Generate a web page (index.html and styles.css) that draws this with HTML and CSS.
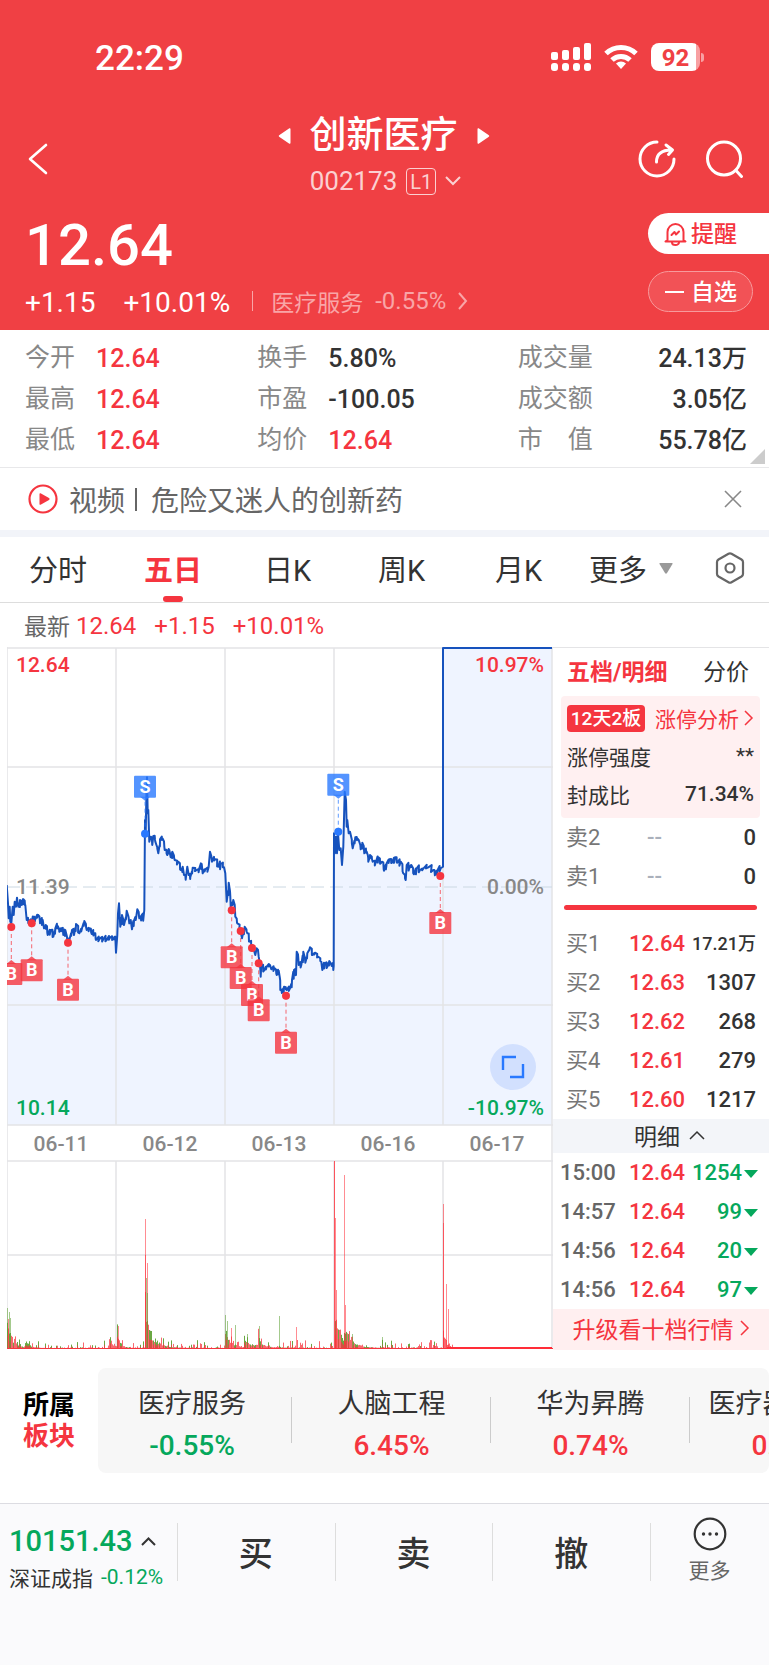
FILE: index.html
```html
<!DOCTYPE html>
<html lang="zh-CN">
<head>
    <meta charset="UTF-8">
    <meta name="viewport" content="width=device-width, initial-scale=1.0">
    <title>创新医疗 002173</title>
    <link rel="stylesheet" href="styles.css">
</head>
<body>
    <header class="header">
        <div class="status-bar">
            <span class="time">22:29</span>
            <div class="status-icons">
                <svg width="40" height="28" viewBox="0 0 40 28" fill="#fff">
                    <rect x="0" y="9" width="7" height="8" rx="2"/><rect x="11" y="7" width="7" height="10" rx="2"/>
                    <rect x="22" y="4" width="7" height="13" rx="2"/><rect x="33" y="0" width="7" height="17" rx="2"/>
                    <rect x="0" y="20" width="7" height="8" rx="3"/><rect x="11" y="20" width="7" height="8" rx="3"/>
                    <rect x="22" y="20" width="7" height="8" rx="3"/><rect x="33" y="20" width="7" height="8" rx="3"/>
                </svg>
                <svg width="34" height="26" viewBox="0 0 34 26" fill="none" stroke="#fff" stroke-width="5">
                    <path d="M2 9.5a21.5 21.5 0 0 1 30 0"/>
                    <path d="M8 16a13 13 0 0 1 18 0"/>
                    <path d="M17 25l-5-5.500a7.500 7.500 0 0 1 10 0z" fill="#fff" stroke="none"/>
                </svg>
                <div class="battery"><span>92</span></div>
            </div>
        </div>

        <nav class="nav">
            <button type="button" class="icon-btn back" aria-label="返回">
                <svg width="20" height="32" viewBox="0 0 20 32" fill="none" stroke="#fff" stroke-width="2.600" stroke-linecap="round" stroke-linejoin="round"><path d="M18 2L2 16l16 14"/></svg>
            </button>
            <div class="title">
                <div class="title-name">
                    <svg width="13" height="18" viewBox="0 0 13 18" fill="#fff"><path d="M11 1.500L1.500 8a1.200 1.200 0 0 0 0 2L11 16.500c1 .6 1.500 0 1.500-1v-13c0-1-.5-1.600-1.500-1z"/></svg>
                    <h1>创新医疗</h1>
                    <svg width="13" height="18" viewBox="0 0 13 18" fill="#fff"><path d="M2 1.500L11.500 8a1.200 1.200 0 0 1 0 2L2 16.500c-1 .6-1.500 0-1.500-1v-13c0-1 .5-1.600 1.500-1z"/></svg>
                </div>
                <button type="button" class="title-code">
                    <span>002173</span>
                    <span class="level">L1</span>
                    <svg width="16" height="10" viewBox="0 0 16 10" fill="none" stroke="#fbd0d1" stroke-width="2"><path d="M1 1l7 7 7-7"/></svg>
                </button>
            </div>
            <div class="nav-right">
                <button type="button" class="icon-btn" aria-label="分享">
                    <svg width="38" height="38" viewBox="0 0 38 38" fill="none" stroke="#fff" stroke-width="3" stroke-linecap="round" stroke-linejoin="round">
                        <path d="M19 2a17 17 0 1 0 17 17"/>
                        <path d="M18.500 22c0-8 5-12 15-12M28 5l6.500 5-4 4.500"/>
                    </svg>
                </button>
                <button type="button" class="icon-btn" aria-label="搜索">
                    <svg width="38" height="38" viewBox="0 0 38 38" fill="none" stroke="#fff" stroke-width="3" stroke-linecap="round"><circle cx="19" cy="18.500" r="16.500"/><path d="M31 30.500l5.500 6"/></svg>
                </button>
            </div>
        </nav>

        <div class="quote">
            <div class="quote-main">
                <div class="price">12.64</div>
                <div class="change">
                    <span>+1.15</span>
                    <span class="change-pct">+10.01%</span>
                    <a href="#" class="industry">医疗服务 <span>-0.55%</span>
                        <svg width="10" height="18" viewBox="0 0 10 18" fill="none" stroke="#f9a5a7" stroke-width="2"><path d="M1 1l7 8-7 8"/></svg>
                    </a>
                </div>
            </div>
            <div class="quote-actions">
                <button type="button" class="remind">
                    <svg width="23" height="24" viewBox="0 0 23 24" fill="none" stroke="#f5353f" stroke-width="2" stroke-linecap="round" stroke-linejoin="round">
                        <path d="M3.500 18v-8a8 8 0 0 1 16 0v8l2 1.500h-20zM8 20.500a3.500 2.500 0 0 0 7 0M7.500 13l3-3 1.500 2.500 3-3"/>
                    </svg>
                    <span>提醒</span>
                </button>
                <button type="button" class="watch"><i></i><span>自选</span></button>
            </div>
        </div>
    </header>

    <main>
        <section class="stats">
            <div class="stat"><span>今开</span><b class="up">12.64</b></div>
            <div class="stat"><span>换手</span><b>5.80%</b></div>
            <div class="stat end"><span>成交量</span><b>24.13万</b></div>
            <div class="stat"><span>最高</span><b class="up">12.64</b></div>
            <div class="stat"><span>市盈</span><b>-100.05</b></div>
            <div class="stat end"><span>成交额</span><b>3.05亿</b></div>
            <div class="stat"><span>最低</span><b class="up">12.64</b></div>
            <div class="stat"><span>均价</span><b class="up">12.64</b></div>
            <div class="stat end"><span>市　值</span><b>55.78亿</b></div>
            <i class="corner"></i>
        </section>

        <section class="video">
            <svg width="30" height="30" viewBox="0 0 30 30"><circle cx="15" cy="15" r="13.500" fill="none" stroke="#f5353f" stroke-width="2.200"/><path d="M11.500 10v10c0 1 .7 1 1.500.6l8-4.700c.8-.5.8-1.300 0-1.800l-8-4.700c-.8-.4-1.500-.4-1.500.6z" fill="#f5353f"/></svg>
            <a href="#">视频<i></i>危险又迷人的创新药</a>
            <button type="button" class="icon-btn" aria-label="关闭">
                <svg width="18" height="18" viewBox="0 0 18 18" stroke="#888" stroke-width="1.600"><path d="M1 1l16 16M17 1L1 17"/></svg>
            </button>
        </section>

        <div class="tabs">
            <button type="button">分时</button>
            <button type="button" class="active">五日</button>
            <button type="button">日K</button>
            <button type="button">周K</button>
            <button type="button">月K</button>
            <button type="button">更多 <svg width="14" height="11" viewBox="0 0 14 11" fill="#999"><path d="M1 0h12q1 0 .5 1L8 10q-1 1.500-2 0L.5 1Q0 0 1 0z"/></svg></button>
            <button type="button" aria-label="设置">
                <svg width="30" height="32" viewBox="0 0 30 32" fill="none" stroke="#666" stroke-width="2.200" stroke-linejoin="round"><path d="M13.500 1.800q1.500-.8 3 0l10 5.700q1.500 1 1.500 2.500v12q0 1.500-1.500 2.500l-10 5.700q-1.500.8-3 0l-10-5.700Q2 23.500 2 22V10q0-1.500 1.500-2.500z"/><circle cx="15" cy="16" r="4.500"/></svg>
            </button>
        </div>

        <div class="latest"><span>最新</span><b>12.64</b><b>+1.15</b><b>+10.01%</b></div>

        <section class="market">
            <div class="chart">
                <svg class="chart-svg" viewBox="0 0 546 702">
                    <path id="area" fill="#eff4ff"/>
                    <g class="grid">
                        <path d="M109 1v477M218 1v477M327 1v477M436 1v477M0 120h546M0 358h546"/>
                        <path d="M0 1h546M0 478h546M0 514h546M0 608h546M109 514v188M218 514v188M327 514v188M436 514v188"/>
                        <path d="M0 0v703M545 0v703"/>
                    </g>
                    <path d="M0 240h546" stroke="#cbd8e2" stroke-dasharray="13 6"/>
                    <path id="line" fill="none" stroke="#1652bd" stroke-width="2" stroke-linejoin="round"/>
                    <g class="axis">
                        <text x="9" y="25" class="fill-up">12.64</text>
                        <text x="9" y="247">11.39</text>
                        <text x="9" y="468" class="fill-down">10.14</text>
                        <text x="537" y="25" class="fill-up right">10.97%</text>
                        <text x="537" y="247" class="right">0.00%</text>
                        <text x="537" y="468" class="fill-down right">-10.97%</text>
                    </g>
                    <g class="axis dates">
                        <text x="54" y="504">06-11</text>
                        <text x="163" y="504">06-12</text>
                        <text x="272" y="504">06-13</text>
                        <text x="381" y="504">06-16</text>
                        <text x="490" y="504">06-17</text>
                    </g>
                    <g id="markers"></g>
                    <g id="volume"></g>
                    <circle cx="506" cy="420" r="23" fill="#d2e0fe"/>
                    <path d="M496 423v-13h13M516 417v13h-13" fill="none" stroke="#2979ff" stroke-width="2.400"/>
                </svg>
            </div>

            <aside class="side">
                <div class="side-tabs">
                    <button type="button" class="active">五档/明细</button>
                    <button type="button">分价</button>
                </div>
                <div class="limit">
                    <div class="limit-row">
                        <span class="badge">12天2板</span>
                        <a href="#" class="up">涨停分析 <svg width="10" height="16" viewBox="0 0 10 16" fill="none" stroke="#f5353f" stroke-width="1.500"><path d="M1 1l7 7-7 7"/></svg></a>
                    </div>
                    <div class="limit-row"><span>涨停强度</span><span>**</span></div>
                    <div class="limit-row"><span>封成比</span><b>71.34%</b></div>
                </div>
                <table class="book">
                    <tr><th>卖2</th><td class="none">--</td><td>0</td></tr>
                    <tr><th>卖1</th><td class="none">--</td><td>0</td></tr>
                </table>
                <div class="ratio"></div>
                <table class="book">
                    <tr><th>买1</th><td class="up">12.64</td><td class="small">17.21万</td></tr>
                    <tr><th>买2</th><td class="up">12.63</td><td>1307</td></tr>
                    <tr><th>买3</th><td class="up">12.62</td><td>268</td></tr>
                    <tr><th>买4</th><td class="up">12.61</td><td>279</td></tr>
                    <tr><th>买5</th><td class="up">12.60</td><td>1217</td></tr>
                </table>
                <button type="button" class="detail-toggle">明细 <svg width="16" height="10" viewBox="0 0 16 10" fill="none" stroke="#333" stroke-width="1.500"><path d="M1 9l7-7 7 7"/></svg></button>
                <table class="book deals">
                    <tr><th>15:00</th><td class="up">12.64</td><td class="down">1254<i></i></td></tr>
                    <tr><th>14:57</th><td class="up">12.64</td><td class="down">99<i></i></td></tr>
                    <tr><th>14:56</th><td class="up">12.64</td><td class="down">20<i></i></td></tr>
                    <tr><th>14:56</th><td class="up">12.64</td><td class="down">97<i></i></td></tr>
                </table>
                <a href="#" class="upgrade">升级看十档行情 <svg width="10" height="16" viewBox="0 0 10 16" fill="none" stroke="#f5353f" stroke-width="1.500"><path d="M1 1l7 7-7 7"/></svg></a>
            </aside>
        </section>

        <section class="plates">
            <h2>所属<em>板块</em></h2>
            <div class="plate-list">
                <a href="#" class="plate">医疗服务<b class="down">-0.55%</b></a>
                <a href="#" class="plate">人脑工程<b class="up">6.45%</b></a>
                <a href="#" class="plate">华为昇腾<b class="up">0.74%</b></a>
                <a href="#" class="plate">医疗器械概念<b class="up">0.38%</b></a>
            </div>
        </section>
    </main>

    <footer class="trade-bar">
        <button type="button" class="index">
            <span class="index-value">10151.43 <svg width="15" height="9" viewBox="0 0 15 9" fill="none" stroke="#333" stroke-width="2"><path d="M1 8l6.500-6.500L14 8"/></svg></span>
            <span class="index-name">深证成指 <span class="down">-0.12%</span></span>
        </button>
        <button type="button" class="trade">买</button>
        <button type="button" class="trade">卖</button>
        <button type="button" class="trade">撤</button>
        <button type="button" class="more">
            <svg width="34" height="34" viewBox="0 0 34 34"><circle cx="17" cy="17" r="15.300" fill="none" stroke="#333" stroke-width="2.200"/><circle cx="10.500" cy="17" r="1.700" fill="#333"/><circle cx="17" cy="17" r="1.700" fill="#333"/><circle cx="23.500" cy="17" r="1.700" fill="#333"/></svg>
            更多
        </button>
    </footer>

    <script src="chart.js"></script>
</body>
</html>
```
FILE: styles.css
```css
* {
    box-sizing: border-box;
}

body {
    margin: 0;
    font-family: Roboto, "Noto Sans CJK SC", sans-serif;
    color: #333;
    background-color: #fafafc;
    overflow-x: hidden;
}

button {
    font-family: inherit;
    color: inherit;
    background: none;
    border: none;
    padding: 0;
    margin: 0;
    cursor: pointer;
}

a {
    color: inherit;
    text-decoration: none;
}

svg {
    display: block;
    flex-shrink: 0;
}

main {
    background-color: white;
}

.up {
    color: #f5353f;
}

.down {
    color: #05a85c;
}

.icon-btn {
    display: flex;
    align-items: center;
}

/* header */
.header {
    background-color: #f04044;
    color: white;
    padding-bottom: 10px;
}

.status-bar {
    height: 114px;
    padding: 0 65px 0 95px;
    display: flex;
    align-items: center;
    justify-content: space-between;
}

.time {
    font-size: 35px;
    font-weight: 500;
    padding-top: 2px;
}

.status-icons {
    display: flex;
    align-items: center;
    gap: 13px;
}

.battery {
    display: flex;
    align-items: center;
}

.battery span {
    width: 49px;
    height: 28px;
    border-radius: 8px;
    background: linear-gradient(to right, white 92%, #f8a0a2 92%);
    color: #f04044;
    font-size: 24px;
    line-height: 30px;
    font-weight: 700;
    text-align: center;
}

.battery::after {
    content: "";
    width: 3px;
    height: 9px;
    margin-left: 1px;
    border-radius: 0 3px 3px 0;
    background-color: #f8a0a2;
}

.nav {
    height: 90px;
    padding: 0 26px 0 28px;
    display: grid;
    grid-template-columns: 1fr auto 1fr;
    align-items: center;
}

.title {
    padding-right: 4px;
}

.title-name {
    display: flex;
    align-items: center;
    justify-content: center;
    gap: 19px;
    height: 44px;
}

.title-name h1 {
    margin: 0;
    font-size: 37px;
    line-height: 44px;
    font-weight: 500;
}

.title-code {
    display: flex;
    align-items: center;
    gap: 9px;
    height: 46px;
    margin: 0 auto;
    padding-left: 4px;
    font-size: 26px;
    color: #fbd0d1;
}

.level {
    width: 30px;
    height: 27px;
    border: 1px solid #fbd0d1;
    border-radius: 4px;
    font-size: 20px;
    line-height: 26px;
}

.nav-right {
    display: flex;
    justify-content: flex-end;
    gap: 29px;
}

.quote {
    display: flex;
    justify-content: space-between;
}

.quote-main {
    padding-left: 25px;
}

.price {
    font-size: 58px;
    line-height: 82px;
    height: 80px;
    font-weight: 500;
}

.change {
    display: flex;
    align-items: center;
    height: 36px;
    font-size: 28px;
}

.change-pct {
    margin-left: 28px;
}

.industry {
    display: flex;
    align-items: center;
    gap: 12px;
    height: 32px;
    margin-left: 22px;
    padding-bottom: 2px;
    font-size: 23px;
    color: #f9a5a7;
}

.industry span {
    font-size: 24px;
}

.industry::before {
    content: "";
    width: 1px;
    height: 20px;
    margin-right: 6px;
    background-color: #f9a5a7;
}

.quote-actions {
    display: flex;
    flex-direction: column;
    gap: 17px;
    padding-top: 9px;
}

.quote-actions button {
    display: flex;
    align-items: center;
    gap: 4px;
    height: 41px;
    padding-left: 16px;
    font-size: 23px;
    font-weight: 500;
}

.quote-actions span {
    padding-bottom: 3px;
}

.quote-actions .remind {
    width: 121px;
    background-color: white;
    color: #f5353f;
    border-radius: 21px 0 0 21px;
}

.quote-actions .watch {
    width: 105px;
    gap: 7px;
    background-color: #f25256;
    border: 1px solid #f79a9c;
    border-radius: 21px;
}

.watch i {
    width: 19px;
    height: 2px;
    background-color: white;
}

/* stats */
.stats {
    position: relative;
    display: grid;
    grid-template-columns: 232fr 260fr 229fr;
    padding: 7px 22px 7px 25px;
    border-bottom: 1px solid #e8e8ea;
}

.stat {
    display: flex;
    gap: 21px;
    height: 41px;
    font-size: 25px;
    line-height: 41px;
}

.stat span {
    color: #888;
}

.stat b {
    font-size: 25px;
    line-height: 44px;
    font-weight: 500;
}

.stat.end {
    justify-content: space-between;
}

.corner {
    position: absolute;
    right: 4px;
    bottom: 3px;
    border-left: 15px solid transparent;
    border-bottom: 15px solid #ccc;
}

/* video */
.video {
    display: flex;
    align-items: center;
    height: 69px;
    padding: 0 27px 0 28px;
    border-bottom: 7px solid #f2f4f9;
}

.video a {
    flex: 1;
    display: flex;
    align-items: center;
    height: 40px;
    margin-left: 11px;
    font-size: 28px;
    color: #666;
}

.video i {
    width: 2px;
    height: 23px;
    margin: 0 14px 0 10px;
    background-color: #666;
}

/* tabs */
.tabs {
    display: grid;
    grid-template-columns: 115fr 120fr 114fr 117fr 94fr 126fr 30px;
    height: 66px;
    padding: 0 24px 0 29px;
    border-bottom: 1px solid #ddd;
}

.tabs button {
    position: relative;
    display: flex;
    align-items: center;
    justify-self: start;
    gap: 12px;
    padding-bottom: 3px;
    font-size: 29px;
}

.tabs .active {
    color: #f5353f;
    font-weight: 700;
}

.tabs .active::after {
    content: "";
    position: absolute;
    left: 50%;
    bottom: 0;
    width: 20px;
    height: 6px;
    margin-left: -10px;
    border-radius: 3px;
    background-color: #f5353f;
}

.latest {
    display: flex;
    align-items: center;
    height: 44px;
    padding-left: 24px;
    font-size: 23px;
    color: #666;
}

.latest b {
    margin-right: 18px;
    padding-top: 2px;
    font-size: 24px;
    font-weight: 400;
    color: #f5353f;
}

.latest span {
    margin-right: 6px;
}

/* chart and order book */
.market {
    display: flex;
}

.chart {
    flex: 1;
    padding-left: 7px;
}

.chart-svg {
    width: 100%;
}

.grid {
    fill: none;
    stroke: #e4e4e6;
    stroke-width: 1.5;
}

.axis {
    font-size: 21px;
    font-weight: 500;
    fill: #888;
}

.fill-up {
    fill: #f5353f;
}

.fill-down {
    fill: #05a85c;
}

.right {
    text-anchor: end;
}

.dates {
    text-anchor: middle;
}

.flag {
    font-size: 18px;
    font-weight: 700;
    text-anchor: middle;
    fill: white;
}

.side {
    width: 216px;
    border-top: 1px solid #e4e4e6;
}

.side-tabs {
    display: flex;
    justify-content: space-between;
    height: 48px;
    padding: 0 20px 5px 14px;
}

.side-tabs button {
    font-size: 23px;
}

.side-tabs .active {
    color: #f5353f;
    font-weight: 700;
}

.limit {
    margin: 0 9px 0 8px;
    padding: 3px 6px 5px;
    border-radius: 4px;
    background-color: #fff0f1;
}

.limit-row {
    display: flex;
    align-items: center;
    justify-content: space-between;
    height: 38px;
    font-size: 21px;
}

.limit-row a {
    display: flex;
    align-items: center;
    gap: 5px;
}

.limit-row b {
    font-size: 21px;
    font-weight: 500;
}

.badge {
    width: 78px;
    border-radius: 4px;
    background-color: #f5353f;
    color: white;
    font-size: 19px;
    line-height: 27px;
    font-weight: 500;
    text-align: center;
}

.book {
    width: 100%;
    border-collapse: collapse;
    table-layout: fixed;
}

.book th,
.book td {
    height: 39px;
    padding: 0;
    line-height: 38px;
}

.book th {
    width: 76px;
    padding-left: 13px;
    text-align: left;
    font-size: 22px;
    font-weight: 400;
    color: #777;
}

.book td {
    width: 56px;
    font-size: 22px;
    font-weight: 500;
}

.book td:last-child {
    width: auto;
    padding-right: 13px;
    text-align: right;
}

.book .none {
    padding-left: 18px;
    color: #aab0bb;
}

.book td.small {
    font-size: 18px;
}

.ratio {
    height: 5px;
    margin: 9px 12px 14px 11px;
    border-radius: 3px;
    background-color: #f5353f;
}

.detail-toggle {
    display: flex;
    align-items: center;
    justify-content: center;
    gap: 9px;
    width: 100%;
    height: 34px;
    padding: 0 0 3px 17px;
    background-color: #f3f5f9;
    font-size: 23px;
}

.deals th {
    padding-left: 7px;
    font-weight: 500;
    color: #666;
}

.deals td:last-child {
    padding-right: 11px;
}

.deals i {
    display: inline-block;
    margin-left: 2px;
    border: 7px solid transparent;
    border-top: 8px solid #05a85c;
    border-bottom: 0;
    vertical-align: 2px;
}

.upgrade {
    display: flex;
    align-items: center;
    justify-content: center;
    gap: 6px;
    height: 41px;
    padding-bottom: 3px;
    background-color: #ffeff0;
    color: #f5353f;
    font-size: 23px;
}

/* plates */
.plates {
    display: flex;
    align-items: center;
    padding: 18px 0 30px 23px;
}

.plates h2 {
    width: 75px;
    margin: 0;
    font-size: 26px;
    line-height: 31px;
    color: black;
    flex-shrink: 0;
}

.plates em {
    display: block;
    font-style: normal;
    color: #f5353f;
}

.plate-list {
    flex: 1;
    display: flex;
    height: 105px;
    padding-top: 16px;
    border-radius: 8px;
    background-color: #f7f7f7;
    overflow: hidden;
}

.plate {
    position: relative;
    flex: 0 0 199px;
    font-size: 27px;
    line-height: 41px;
    text-align: center;
    white-space: nowrap;
}

.plate:first-child {
    flex-basis: 194px;
    padding-right: 6px;
}

.plate:not(:last-child)::after {
    content: "";
    position: absolute;
    right: 0;
    top: 13px;
    width: 1px;
    height: 46px;
    background-color: #ccc;
}

.plate b {
    display: block;
    font-size: 28px;
    font-weight: 500;
}

/* bottom bar */
.trade-bar {
    display: flex;
    border-top: 1px solid #dcdce2;
    background-color: #fafafc;
    padding: 10px 0 75px;
}

.trade-bar button {
    position: relative;
    height: 78px;
}

.trade-bar .index {
    width: 177px;
    padding: 7px 0 0 9px;
    text-align: left;
}

.index-value {
    display: flex;
    align-items: center;
    gap: 9px;
    height: 40px;
    font-size: 29px;
    font-weight: 500;
    color: #05a85c;
}

.index-name {
    display: flex;
    align-items: center;
    gap: 8px;
    height: 32px;
    font-size: 21px;
    white-space: nowrap;
}

.trade-bar .trade {
    flex: 158;
    padding-bottom: 4px;
    font-size: 34px;
    font-weight: 500;
}

.trade-bar .more {
    flex: 119;
    display: flex;
    flex-direction: column;
    align-items: center;
    font-size: 21px;
    line-height: 41px;
    color: #666;
    padding-top: 3px;
}

.trade-bar .trade::before,
.trade-bar .more::before {
    content: "";
    position: absolute;
    left: 0;
    top: 9px;
    width: 1px;
    height: 58px;
    background-color: #ddd;
}
```
FILE: chart.js
```javascript
const prices = [
    20,735, 24,790, 26,835, 29,800, 31,845, 34,850, 38,800, 41,825, 44,785, 48,800, 51,773, 55,800, 60,780, 65,795, 70,778,
    76,795, 80,840, 86,845, 95,848, 100,830, 105,840, 115,825, 120,850, 128,840, 132,865, 137,855, 143,885, 152,870, 160,890,
    166,865, 173,858, 178,875, 185,865, 190,885, 196,870, 202,905, 208,900, 216,870, 222,885, 228,852, 238,880, 246,865,
    253,843, 260,870, 268,865, 275,882, 282,880, 288,900, 300,895, 310,898, 320,900, 330,893, 340,898, 346,890, 348,938,
    352,885, 354,820, 357,790, 361,860, 366,825, 372,855, 380,812, 388,850, 392,840, 396,868, 402,842, 408,835, 412,808,
    418,835, 425,825, 430,838, 433,810, 435,540, 437,580, 439,480, 441,412, 443,520, 445,510, 448,605, 452,590, 457,615,
    460,588, 466,605, 475,640, 480,598, 488,596, 494,630, 502,645, 508,630, 512,652, 517,635, 524,660, 535,665, 542,690,
    548,680, 552,705, 558,710, 562,680, 566,705, 571,712, 578,683, 590,690, 598,685, 605,672, 608,700, 616,688, 626,680,
    630,635, 636,665, 645,658, 655,680, 662,672, 672,682, 676,700, 680,785, 686,728, 692,800, 700,780, 706,830, 712,850,
    722,875, 726,895, 734,860, 742,880, 748,905, 756,915, 766,945, 770,925, 776,950, 782,1010, 784,975, 792,992, 800,980,
    810,975, 814,988, 824,985, 830,1005, 836,992, 841,1050, 846,1055, 852,1040, 860,1050, 870,1045, 876,1020, 882,990,
    888,1005, 890,935, 896,975, 904,975, 910,935, 916,968, 922,940, 930,922, 938,945, 945,938, 955,950, 964,965, 967,990,
    974,970, 982,980, 988,963, 995,978, 1001,978, 1002,580, 1005,640, 1008,590, 1011,640, 1014,580, 1018,630, 1022,625,
    1026,675, 1030,620, 1034,455, 1038,480, 1040,560, 1042,540, 1046,580, 1050,575, 1058,625, 1066,592, 1072,595, 1076,600,
    1082,628, 1087,608, 1093,640, 1100,635, 1105,665, 1110,645, 1118,665, 1128,665, 1135,652, 1142,670, 1146,665, 1152,692,
    1160,670, 1168,658, 1176,668, 1185,652, 1192,668, 1202,665, 1210,700, 1217,720, 1220,675, 1228,685, 1234,675, 1242,703,
    1250,685, 1260,690, 1270,686, 1285,682, 1300,690, 1305,705, 1312,692, 1322,685, 1329,680, 1329,24, 1656,24
];

const trades = [
    ['B', 34, 861], ['B', 95, 850], ['B', 204, 908], ['B', 695, 811], ['B', 722, 873], ['B', 756, 924],
    ['B', 776, 970], ['B', 858, 1067], ['B', 1321, 708], ['S', 435, 581], ['S', 1015, 575]
];

// volume: start, height and fade length of each burst
const bursts = [[0, 34, 5], [19, 7, 4], [102, 9, 5], [110, 16, 3], [138, 60, 3], [140, 12, 10], [218, 20, 6],
    [237, 7, 15], [251, 11, 3], [328, 38, 7], [337, 16, 8], [436, 22, 3]];

const spikes = [
    [0, 41, 'g'], [2, 37, 'g'], [3, 31, 'g'], [1, 30, 'r'], [111, 23, 'r'], [138, 130, 'r'], [138, 94, 'r'], [139, 71, 'g'],
    [140, 86, 'r'], [140, 56, 'g'], [218, 34, 'g'], [220, 28, 'g'], [224, 21, 'r'], [228, 24, 'g'], [240, 15, 'g'],
    [252, 23, 'g'], [272, 33, 'g'], [289, 22, 'r'], [327, 188, 'r'], [327, 188, 'r'], [328, 131, 'r'], [329, 59, 'r'],
    [337, 174, 'r'], [338, 44, 'r'], [345, 15, 'g'], [375, 12, 'g'], [436, 145, 'r'], [436, 126, 'r'], [439, 65, 'r'], [441, 40, 'r']
];

let seed = 7;
function random() {
    seed = (seed * 16807) % 2147483647;
    return seed / 2147483647;
}

function px(v) {
    return Math.round((v / 3 - 7) * 10) / 10;
}

function drawLine() {
    let d = '';
    for (let i = 0; i < prices.length; i += 2) {
        const x = prices[i], y = prices[i + 1];
        if (i > 0) {
            const x0 = prices[i - 2], y0 = prices[i - 1];
            if (x - x0 >= 5 && x < 1329) {
                d += `L${px((x * 2 + x0) / 3)} ${px((y + y0) / 2 - random() * 12)}`;
                d += `L${px((x + x0 * 2) / 3 + 3)} ${px((y + y0) / 2 + random() * 12)}`;
            }
        }
        d += (i ? 'L' : 'M') + px(x) + ' ' + px(y);
    }
    document.getElementById('line').setAttribute('d', d);
    document.getElementById('area').setAttribute('d', d + 'V478H0Z');
}

function drawMarkers() {
    let html = '';
    trades.forEach(([type, cx, cy]) => {
        const x = px(cx), y = px(cy);
        const buy = type === 'B';
        const color = buy ? '#f5353f' : '#2979ff';
        const mid = buy ? y + 47 : y - 47;
        const tip = buy ? mid - 14 : mid + 14;
        const edge = buy ? mid - 10 : mid + 10;
        html += `<path d="M${x} ${y}V${tip}" stroke="${color}" stroke-opacity=".75" stroke-dasharray="4 3"/>
            <g fill="${color}" fill-opacity=".8"><rect x="${x - 11}" y="${mid - 11}" width="22" height="22" rx="1"/>
            <path d="M${x - 5} ${edge}L${x} ${tip}l5 ${edge - tip}z"/></g>
            <circle cx="${x}" cy="${y}" r="4" fill="${color}"/>
            <text class="flag" x="${x}" y="${mid + 6}">${type}</text>`;
    });
    document.getElementById('markers').innerHTML = html;
}

function drawVolume() {
    const paths = { r: '', g: '' };
    for (let x = 0; x < 448; x++) {
        let h = 1 + Math.pow(random(), 6) * 8;
        bursts.forEach(([start, height, fade]) => {
            if (x >= start) h += height * Math.exp((start - x) / fade) * (0.5 + random() * 0.5);
        });
        const green = random() > 0.55 && x < 436;
        paths[green ? 'g' : 'r'] += `M${x + 0.5} 702v-${h.toFixed(1)}`;
        if (green) paths.r += `M${x + 0.5} 702v-${(h / 2).toFixed(1)}`;
    }
    let html = `<path d="${paths.g}" stroke="#6aa843"/><path d="${paths.r}" stroke="#f5353f" stroke-opacity=".75"/>`;
    spikes.forEach(([x, h, c]) => {
        html += `<path d="M${x + 0.5} 702v-${h}" stroke="${c === 'r' ? '#ff2d38' : '#5a9e30'}" stroke-opacity=".55"/>`;
    });
    html += '<path d="M0 702h546" stroke="#f5353f" stroke-width="2"/><path d="M440 701h105" stroke="#ff2d38" stroke-width="2"/>';
    document.getElementById('volume').innerHTML = html;
}

drawLine();
drawMarkers();
drawVolume();
```
